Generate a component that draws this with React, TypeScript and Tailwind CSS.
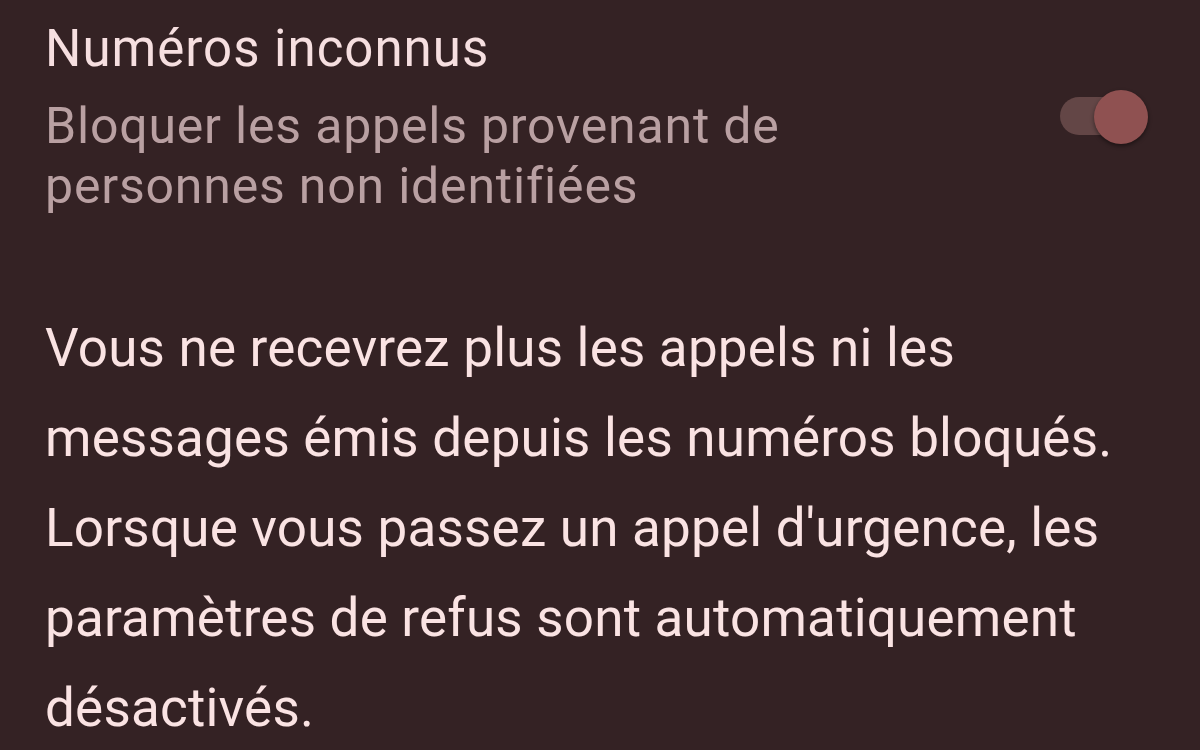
export default function App() {
    return (
        <div className="w-[1200px] h-[750px] overflow-hidden bg-[#342224] font-['Roboto',sans-serif]">
            {/* Setting row */}
            <div className="flex items-start pl-[45px] pr-[52px] pt-[19px]">
                <div className="flex-1">
                    <h1 className="text-[51px] leading-[60px] tracking-[1px] text-[#f6dfe0] font-normal">Numéros inconnus</h1>
                    <p className="mt-[17px] text-[50px] leading-[60px] tracking-[0.8px] text-[#b9a0a2] w-[800px]">
                        Bloquer les appels provenant de personnes non identifiées
                    </p>
                </div>
                <div className="relative mt-[69px] w-[90px] h-[56px] flex items-center">
                    <div className="w-[68px] h-[38px] ml-[2px] rounded-full bg-[#634646]" />
                    <div className="absolute right-0 top-[2px] w-[54px] h-[54px] rounded-full bg-[#8f5151] shadow-[0_2px_4px_rgba(0,0,0,0.45)]" />
                </div>
            </div>

            {/* Info */}
            <p className="pl-[45px] mt-[87px] text-[53px] leading-[90px] tracking-[0.2px] text-[#fae3e3] whitespace-nowrap">
                Vous ne recevrez plus les appels ni les<br />
                messages émis depuis les numéros bloqués.<br />
                Lorsque vous passez un appel d'urgence, les<br />
                paramètres de refus sont automatiquement<br />
                désactivés.
            </p>
        </div>
    );
}
